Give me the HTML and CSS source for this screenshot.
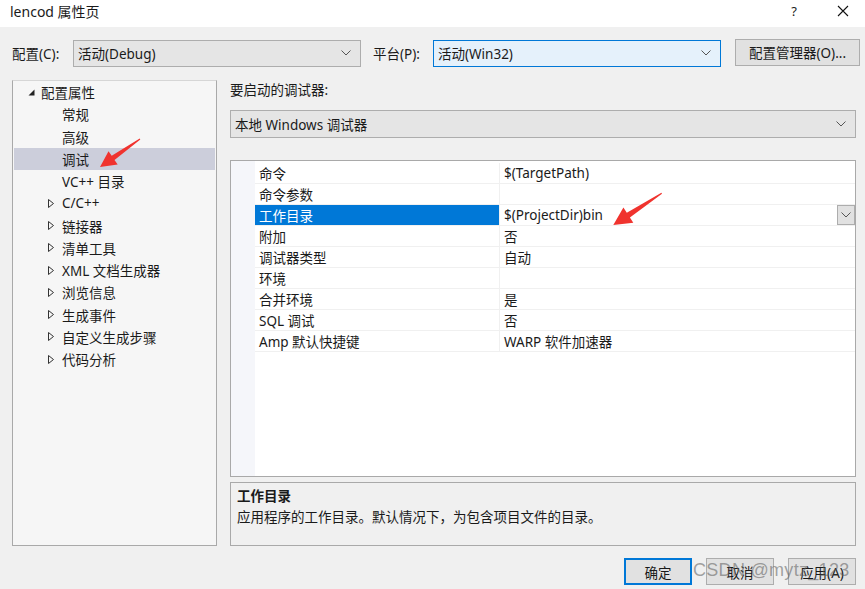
FILE: index.html
```html
<!DOCTYPE html>
<html lang="zh-CN">
<head>
    <meta charset="UTF-8">
    <title>lencod 属性页</title>
    <link rel="stylesheet" href="styles.css">
</head>
<body>
    <div class="window">
        <div class="titlebar">
            <span class="title">lencod 属性页</span>
            <span class="help">?</span>
            <svg class="close" width="12" height="12" viewBox="0 0 12 12"><path d="M1 1 L11 11 M11 1 L1 11" stroke="#111" stroke-width="1.1" fill="none"/></svg>
        </div>

        <div class="dialog">
            <div class="toolbar">
                <label class="tb-label">配置(C):</label>
                <div class="combo">
                    <span>活动(Debug)</span>
                    <svg class="chev" width="10" height="6" viewBox="0 0 10 6"><path d="M0.5 0.5 L5 5 L9.5 0.5" stroke="#555" fill="none"/></svg>
                </div>
                <label class="tb-label platform-label">平台(P):</label>
                <div class="combo focused">
                    <span>活动(Win32)</span>
                    <svg class="chev" width="10" height="6" viewBox="0 0 10 6"><path d="M0.5 0.5 L5 5 L9.5 0.5" stroke="#555" fill="none"/></svg>
                </div>
                <button class="btn manager-btn">配置管理器(O)...</button>
            </div>

            <div class="main">
                <div class="tree">
                    <div class="tree-row root">
                        <svg class="tri" width="7" height="7" viewBox="0 0 7 7"><path d="M6.5 0.5 L6.5 6.5 L0.5 6.5 Z" fill="#222"/></svg>
                        <span>配置属性</span>
                    </div>
                    <div class="tree-row child">常规</div>
                    <div class="tree-row child">高级</div>
                    <div class="tree-row child selected">调试</div>
                    <div class="tree-row child">VC++ 目录</div>
                    <div class="tree-row group"><svg class="tri-open" width="6" height="9" viewBox="0 0 6 9"><path d="M0.5 0.5 L5.5 4.5 L0.5 8.5 Z" stroke="#333" fill="none"/></svg><span>C/C++</span></div>
                    <div class="tree-row group"><svg class="tri-open" width="6" height="9" viewBox="0 0 6 9"><path d="M0.5 0.5 L5.5 4.5 L0.5 8.5 Z" stroke="#333" fill="none"/></svg><span>链接器</span></div>
                    <div class="tree-row group"><svg class="tri-open" width="6" height="9" viewBox="0 0 6 9"><path d="M0.5 0.5 L5.5 4.5 L0.5 8.5 Z" stroke="#333" fill="none"/></svg><span>清单工具</span></div>
                    <div class="tree-row group"><svg class="tri-open" width="6" height="9" viewBox="0 0 6 9"><path d="M0.5 0.5 L5.5 4.5 L0.5 8.5 Z" stroke="#333" fill="none"/></svg><span>XML 文档生成器</span></div>
                    <div class="tree-row group"><svg class="tri-open" width="6" height="9" viewBox="0 0 6 9"><path d="M0.5 0.5 L5.5 4.5 L0.5 8.5 Z" stroke="#333" fill="none"/></svg><span>浏览信息</span></div>
                    <div class="tree-row group"><svg class="tri-open" width="6" height="9" viewBox="0 0 6 9"><path d="M0.5 0.5 L5.5 4.5 L0.5 8.5 Z" stroke="#333" fill="none"/></svg><span>生成事件</span></div>
                    <div class="tree-row group"><svg class="tri-open" width="6" height="9" viewBox="0 0 6 9"><path d="M0.5 0.5 L5.5 4.5 L0.5 8.5 Z" stroke="#333" fill="none"/></svg><span>自定义生成步骤</span></div>
                    <div class="tree-row group"><svg class="tri-open" width="6" height="9" viewBox="0 0 6 9"><path d="M0.5 0.5 L5.5 4.5 L0.5 8.5 Z" stroke="#333" fill="none"/></svg><span>代码分析</span></div>
                </div>

                <div class="content">
                    <div class="section-label">要启动的调试器:</div>
                    <div class="combo wide">
                        <span>本地 Windows 调试器</span>
                        <svg class="chev" width="10" height="6" viewBox="0 0 10 6"><path d="M0.5 0.5 L5 5 L9.5 0.5" stroke="#555" fill="none"/></svg>
                    </div>

                    <div class="grid">
                        <div class="gutter"></div>
                        <div class="rows">
                            <div class="prop"><div class="name">命令</div><div class="value">$(TargetPath)</div></div>
                            <div class="prop"><div class="name">命令参数</div><div class="value"></div></div>
                            <div class="prop active">
                                <div class="name">工作目录</div>
                                <div class="value">
                                    <span>$(ProjectDir)bin</span>
                                    <div class="drop">
                                        <svg width="10" height="6" viewBox="0 0 10 6"><path d="M0.5 0.5 L5 5 L9.5 0.5" stroke="#555" fill="none"/></svg>
                                    </div>
                                </div>
                            </div>
                            <div class="prop"><div class="name">附加</div><div class="value">否</div></div>
                            <div class="prop"><div class="name">调试器类型</div><div class="value">自动</div></div>
                            <div class="prop"><div class="name">环境</div><div class="value"></div></div>
                            <div class="prop"><div class="name">合并环境</div><div class="value">是</div></div>
                            <div class="prop"><div class="name">SQL 调试</div><div class="value">否</div></div>
                            <div class="prop"><div class="name">Amp 默认快捷键</div><div class="value">WARP 软件加速器</div></div>
                        </div>
                    </div>

                    <div class="desc">
                        <div class="desc-title">工作目录</div>
                        <div class="desc-text">应用程序的工作目录。默认情况下，为包含项目文件的目录。</div>
                    </div>
                </div>
            </div>

            <div class="footer">
                <button class="btn default">确定</button>
                <button class="btn">取消</button>
                <button class="btn">应用(A)</button>
            </div>
        </div>

        <div class="watermark">CSDN @mytz_123</div>

        <!-- red annotation arrows -->
        <svg class="marks" width="865" height="589" viewBox="0 0 865 589">
            <polygon fill="#f0332e" points="139.7,138.6 111.7,155.8 108.5,151.2 100,167 117.7,164.4 114.5,159.9 140.3,139.4"/>
            <polygon fill="#f0332e" points="661.4,192.8 626.8,212.8 623.4,207.6 613.3,225 633.3,222.7 629.9,217.5 662,193.8"/>
        </svg>
    </div>
</body>
</html>
```

FILE: styles.css
```css
body {
    margin: 0;
    font-family: "Noto Sans", "Noto Sans CJK SC", sans-serif;
    font-size: 13.5px;
    color: #1a1a1a;
}

.window {
    position: relative;
    width: 865px;
    height: 589px;
    background-color: #f0f0f0;
    overflow: hidden;
}

.titlebar {
    height: 27px;
    background-color: #fff;
    display: flex;
    align-items: center;
    padding-left: 10px;
    padding-right: 16px;
    box-sizing: border-box;
}

.title {
    font-size: 14px;
    flex: 1;
    margin-top: -6px;
}

.help {
    font-size: 13px;
    margin-right: 40px;
    margin-top: -6px;
}

.close {
    margin-top: -6px;
}

.dialog {
    padding: 12px 9px 0 12px;
}

/* top row */
.toolbar {
    display: flex;
    align-items: center;
    height: 28px;
}

.toolbar > * {
    flex-shrink: 0;
}

.tb-label {
    width: 61px;
}

.platform-label {
    width: 60px;
    margin-left: 12px;
}

.combo {
    width: 288px;
    height: 27px;
    box-sizing: border-box;
    border: 1px solid #adadad;
    background-color: #e5e5e5;
    display: flex;
    align-items: center;
    justify-content: space-between;
    padding: 0 9px 0 4px;
}

.combo.focused {
    background-color: #e5f1fb;
    border-color: #0078d7;
}

.combo.wide {
    width: 626px;
    height: 28px;
    margin-top: 10px;
}

.chev {
    display: block;
}

.btn {
    font-family: inherit;
    font-size: 13.5px;
    color: #1a1a1a;
    background-color: #e1e1e1;
    border: 1px solid #adadad;
    height: 27px;
    width: 68px;
    padding: 0;
}

.manager-btn {
    width: 125px;
    margin-left: 14px;
    margin-top: -2px;
}

/* main area */
.main {
    display: flex;
    margin-top: 13px;
    height: 466px;
}

.tree {
    width: 205px;
    flex-shrink: 0;
    box-sizing: border-box;
    border: 1px solid #a9a9a9;
    border-top-color: #d6d6d6;
    background-color: #f6f6f6;
    padding: 0 1px;
}

.tree-row {
    height: 22.25px;
    display: flex;
    align-items: center;
    box-sizing: border-box;
}

.tree-row.root {
    padding-left: 14px;
}

.tree-row.root .tri {
    margin-right: 6px;
}

.tree-row.child {
    padding-left: 48px;
}

.tree-row.group {
    padding-left: 34px;
}

.tree-row.group .tri-open {
    margin-right: 8px;
}

.tree-row.selected {
    background-color: #cccedb;
}

.content {
    width: 626px;
    flex-shrink: 0;
    margin-left: 13px;
}

.section-label {
    margin-top: 1px;
    height: 19px;
    line-height: 19px;
}

/* property grid */
.grid {
    margin-top: 22px;
    height: 317px;
    box-sizing: border-box;
    border: 1px solid #a9a9a9;
    background-color: #fff;
    display: flex;
}

.gutter {
    width: 24px;
    background-color: #f5f6fa;
}

.rows {
    flex: 1;
    padding-top: 2px;
}

.prop {
    display: flex;
    height: 21px;
    box-sizing: border-box;
    border-bottom: 1px solid #f0f0f0;
}

.name {
    width: 245px;
    padding-left: 4px;
    box-sizing: border-box;
    border-right: 1px solid #f0f0f0;
    display: flex;
    align-items: center;
}

.value {
    flex: 1;
    padding-left: 4px;
    display: flex;
    align-items: center;
    justify-content: space-between;
}

.prop.active .name {
    background-color: #0078d7;
    color: #fff;
}

.drop {
    width: 18px;
    height: 20px;
    box-sizing: border-box;
    border: 1px solid #adadad;
    background-color: #e1e1e1;
    display: flex;
    align-items: center;
    justify-content: center;
}

/* description */
.desc {
    margin-top: 5px;
    height: 64px;
    box-sizing: border-box;
    border: 1px solid #a9a9a9;
    padding: 3px 6px;
}

.desc-title {
    font-weight: bold;
    line-height: 21px;
}

.desc-text {
    line-height: 21px;
}

/* bottom buttons */
.footer {
    display: flex;
    justify-content: flex-end;
    gap: 14px;
    margin-top: 12px;
}

.btn.default {
    border-color: #0078d7;
    box-shadow: inset 0 0 0 1px #0078d7;
}

.watermark {
    position: absolute;
    left: 693px;
    top: 560px;
    font-family: "Liberation Sans", sans-serif;
    font-size: 18px;
    color: rgba(90, 90, 90, 0.55);
    letter-spacing: 0.3px;
}

.marks {
    position: absolute;
    left: 0;
    top: 0;
    pointer-events: none;
}
```
